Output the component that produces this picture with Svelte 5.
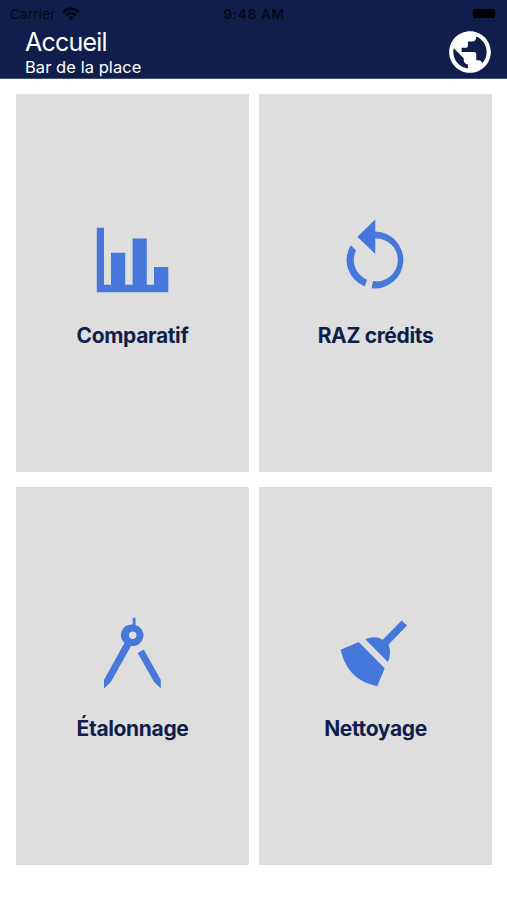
<script lang="ts">
  type Tile = { id: string; label: string; path: string }

  const title = 'Accueil'
  const place = 'Bar de la place'

  const tiles: Tile[] = [
    {
      id: 'compare',
      label: 'Comparatif',
      path: 'M6.8 9.8H14V66.8H21V34.8H35.2V66.8H42.6V20.6H56.8V66.8H64V49H78.3V74.2H6.8Z',
    },
    {
      id: 'reset',
      label: 'RAZ crédits',
      path: 'M42.3 1.4V13.6A28.4 28.4 0 1 1 38.6 70.2L40 63.1A21.4 21.4 0 1 0 42.3 20.6V36L24.3 18.7ZM17.7 27.2A28.4 28.4 0 0 0 31.7 68.4L34 61.7A21.4 21.4 0 0 1 23 32.5Z',
    },
    {
      id: 'calibrate',
      label: 'Étalonnage',
      path: 'M42.7 6.7H45.5V14A10.7 10.7 0 0 1 41 34.9L21 70.7L14 77.5V69L34.4 32.1A10.7 10.7 0 0 1 42.7 13.6ZM42.7 20.6A3.7 3.7 0 1 0 42.7 28A3.7 3.7 0 1 0 42.7 20.6ZM47.7 41.9L53.7 38.5L70.8 69V77.5L64 70.7Z',
    },
    {
      id: 'clean',
      label: 'Nettoyage',
      path: 'M68.6 9.4L74 14.4L55.6 33.6Q58.9 42.5 54.9 50.9L32.3 28.3Q41.5 24.2 49.7 28.8ZM25.7 31L51.7 57.3L44.3 75C25.5 71.5 12.5 60 7.7 38.7Z',
    },
  ]
</script>

<div class="screen">
  <header>
    <div class="status">
      <div class="carrier">
        <span>Carrier</span>
        <svg width="18" height="14" viewBox="0 0 18 14" aria-hidden="true">
          <path d="M1 5.2Q9 -2 17 5.2M4 8.2Q9 3.8 14 8.2" fill="none" stroke="#050914" stroke-width="2.5" />
          <path d="M6.1 10.2Q9 8 11.9 10.2L9 13.2Z" fill="#050914" />
        </svg>
      </div>
      <span class="clock">9:48 AM</span>
      <span class="battery"></span>
    </div>
    <div class="bar">
      <div class="heading">
        <h1>{title}</h1>
        <p>{place}</p>
      </div>
      <button type="button" class="globe" aria-label="Langue">
        <svg width="50" height="50" viewBox="0 0 24 24">
          <path
            fill="#fff"
            d="M12 2C6.48 2 2 6.48 2 12s4.48 10 10 10 10-4.48 10-10S17.52 2 12 2zm-1 17.93c-3.95-.49-7-3.85-7-7.93 0-.62.08-1.21.21-1.79L9 15v1c0 1.1.9 2 2 2v1.93zm6.9-2.54c-.26-.81-1-1.39-1.9-1.39h-1v-3c0-.55-.45-1-1-1H8v-2h2c.55 0 1-.45 1-1V7h2c1.1 0 2-.9 2-2v-.41c2.93 1.19 5 4.06 5 7.41 0 2.08-.8 3.97-2.1 5.39z"
          />
        </svg>
      </button>
    </div>
  </header>

  <main>
    {#each tiles as tile (tile.id)}
      <button type="button" class="tile">
        <svg width="85" height="84" viewBox="0 0 85 84" aria-hidden="true">
          <path d={tile.path} fill="#4678dc" fill-rule="evenodd" />
        </svg>
        <span class="label">{tile.label}</span>
      </button>
    {/each}
  </main>
</div>

<style>
  :global(body) {
    background: #fff;
  }

  .screen {
    height: 900px;
    font-family: Inter, 'Liberation Sans', sans-serif;
    background: #fff;
  }

  header {
    display: flex;
    flex-direction: column;
    box-sizing: border-box;
    height: 79px;
    background: #101e4c;
    border-bottom: 1px solid #46537c;
  }

  .status {
    display: grid;
    grid-template-columns: 1fr auto 1fr;
    align-items: center;
    height: 27px;
    padding: 0 9px 0 10px;
    color: #050914;
    font-size: 13.5px;
  }

  .carrier {
    display: flex;
    align-items: center;
    gap: 6px;
    letter-spacing: 0.2px;
  }

  .clock {
    font-weight: 600;
    letter-spacing: 0.7px;
  }

  .battery {
    justify-self: end;
    width: 22px;
    height: 9px;
    margin-right: 3px;
    border-radius: 1px;
    background: #000;
  }

  .bar {
    display: flex;
    justify-content: space-between;
    height: 51px;
    padding: 0 12px 0 25px;
    color: #fff;
  }

  h1,
  p {
    margin: 0;
    font-weight: 400;
  }

  h1 {
    font-size: 25px;
    line-height: 30px;
    letter-spacing: -0.8px;
  }

  p {
    font-size: 16.5px;
    line-height: 20px;
    letter-spacing: 0.05px;
  }

  button {
    border: 0;
    padding: 0;
    font: inherit;
    background: none;
    cursor: pointer;
  }

  button svg {
    display: block;
  }

  .globe {
    height: 50px;
  }

  main {
    display: grid;
    grid-template-columns: 233px 233px;
    grid-auto-rows: 378px;
    gap: 15px 10px;
    padding: 15px 15px 0 16px;
  }

  .tile {
    display: flex;
    flex-direction: column;
    align-items: center;
    justify-content: flex-start;
    padding-top: 124px;
    background: #dedede;
    color: #101e4c;
  }

  .label {
    margin-top: 21px;
    font-size: 21px;
    font-weight: 700;
    line-height: 26px;
    letter-spacing: -0.35px;
  }
</style>
